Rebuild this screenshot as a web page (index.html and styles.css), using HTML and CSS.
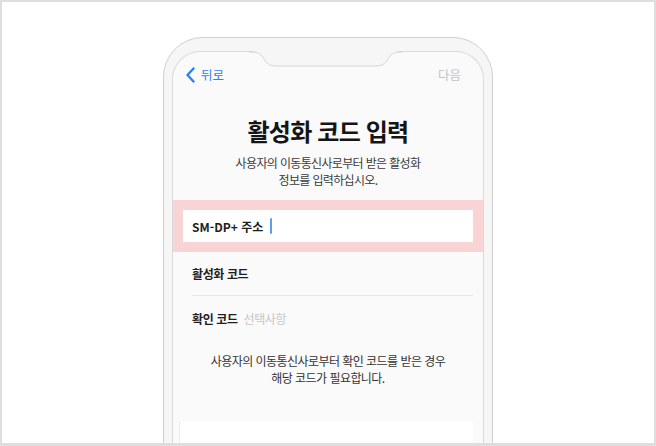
FILE: index.html
```html
<!DOCTYPE html>
<html lang="ko">
<head>
<meta charset="utf-8">
<title>활성화 코드 입력</title>
<link rel="stylesheet" href="styles.css">
</head>
<body>
<div class="page">
  <div class="phone">
    <div class="screen">
      <svg class="notch" width="154" height="16" viewBox="0 0 154 16">
        <path d="M0,0 C9,0 11,2 15,8 C18,13 21,15 27,15 L127,15 C133,15 136,13 139,8 C143,2 145,0 154,0 Z" fill="#f6f6f6"/>
        <path d="M0,1 C9,1 11,2 15,8 C18,13 21,15 27,15 L127,15 C133,15 136,13 139,8 C143,2 145,1 154,1" fill="none" stroke="#d6d6d6" stroke-width="1"/>
      </svg>
      <div class="nav">
        <div class="back">
          <svg class="chev" width="9" height="16" viewBox="0 0 9 16"><path d="M7.5,1.5 L1.5,8 L7.5,14.5" fill="none" stroke="#2d7ff6" stroke-width="2.4" stroke-linecap="round" stroke-linejoin="round"/></svg>
          <span>뒤로</span>
        </div>
        <span class="next">다음</span>
      </div>
      <h1 class="title">활성화 코드 입력</h1>
      <p class="sub">사용자의 이동통신사로부터 받은 활성화<br>정보를 입력하십시오.</p>
      <div class="highlight">
        <div class="input">
          <span class="label label-latin">SM-DP+ 주소</span>
          <span class="cursor"></span>
        </div>
      </div>
      <div class="row"><span class="label">활성화 코드</span></div>
      <div class="sep"></div>
      <div class="row"><span class="label">확인 코드</span><span class="ph">선택사항</span></div>
      <p class="note">사용자의 이동통신사로부터 확인 코드를 받은 경우<br>해당 코드가 필요합니다.</p>
      <div class="keyboard"></div>
    </div>
  </div>
</div>
</body>
</html>
```
FILE: styles.css
```css
* { box-sizing: border-box; }
html, body { margin: 0; padding: 0; background: #fff; }
body { font-family: "Noto Sans CJK KR", "Noto Sans", sans-serif; }
.page {
  width: 656px;
  height: 446px;
  border: 2px solid #dedede;
  border-bottom-width: 3px;
  background: #fff;
  overflow: hidden;
}
.phone {
  width: 330px;
  height: 440px;
  margin: 35px auto 0;
  background: #f6f6f6;
  border: 1px solid #d0d0d0;
  border-radius: 40px 40px 0 0;
  padding: 13px 8px 0;
}
.screen {
  position: relative;
  height: 100%;
  background: #fafafa;
  border: 1px solid #dadada;
  border-bottom: none;
  border-radius: 28px 28px 0 0;
}
.notch {
  position: absolute;
  left: 76px;
  top: -1px;
  display: block;
}
.nav {
  height: 46px;
  display: flex;
  align-items: center;
  justify-content: space-between;
  padding: 0 22px 0 13px;
  font-size: 12.5px;
  line-height: 16px;
}
.back {
  display: flex;
  align-items: center;
  gap: 6px;
  color: #2d7ff6;
}
.chev { display: block; }
.next { color: #c4c4c4; }
.title {
  margin: 18px 0 0;
  font-size: 24px;
  line-height: 30px;
  font-weight: 700;
  color: #151515;
  text-align: center;
  letter-spacing: -0.8px;
}
.sub {
  margin: 8px 0 0;
  font-size: 12px;
  line-height: 17px;
  color: #3a3a3a;
  text-align: center;
  letter-spacing: -0.65px;
}
.highlight {
  margin-top: 12px;
  background: #f8d4d4;
  padding: 10px;
}
.input {
  height: 32px;
  background: #fff;
  display: flex;
  align-items: center;
  padding-left: 9px;
  gap: 7px;
}
.label {
  font-size: 12px;
  font-weight: 700;
  color: #1e1e1e;
  letter-spacing: -0.4px;
}
.label-latin { letter-spacing: 0; }
.cursor {
  width: 2px;
  height: 16px;
  background: #5b9cf7;
  border-radius: 1px;
}
.row {
  height: 43px;
  display: flex;
  align-items: center;
  padding-left: 19px;
  gap: 6px;
}
.sep {
  height: 1px;
  background: #e6e6e6;
  margin: 0 10px 0 19px;
}
.row + .sep + .row { height: 44px; }
.ph {
  font-size: 12px;
  color: #c6c6c6;
  letter-spacing: -0.4px;
}
.note {
  margin: 12px 0 0;
  font-size: 12px;
  line-height: 17px;
  color: #333;
  text-align: center;
  letter-spacing: -0.55px;
}
.keyboard {
  margin: 35px 10px 0 6px;
  height: 40px;
  background: #fff;
  border-left: 1px solid #ececec;
}
```
